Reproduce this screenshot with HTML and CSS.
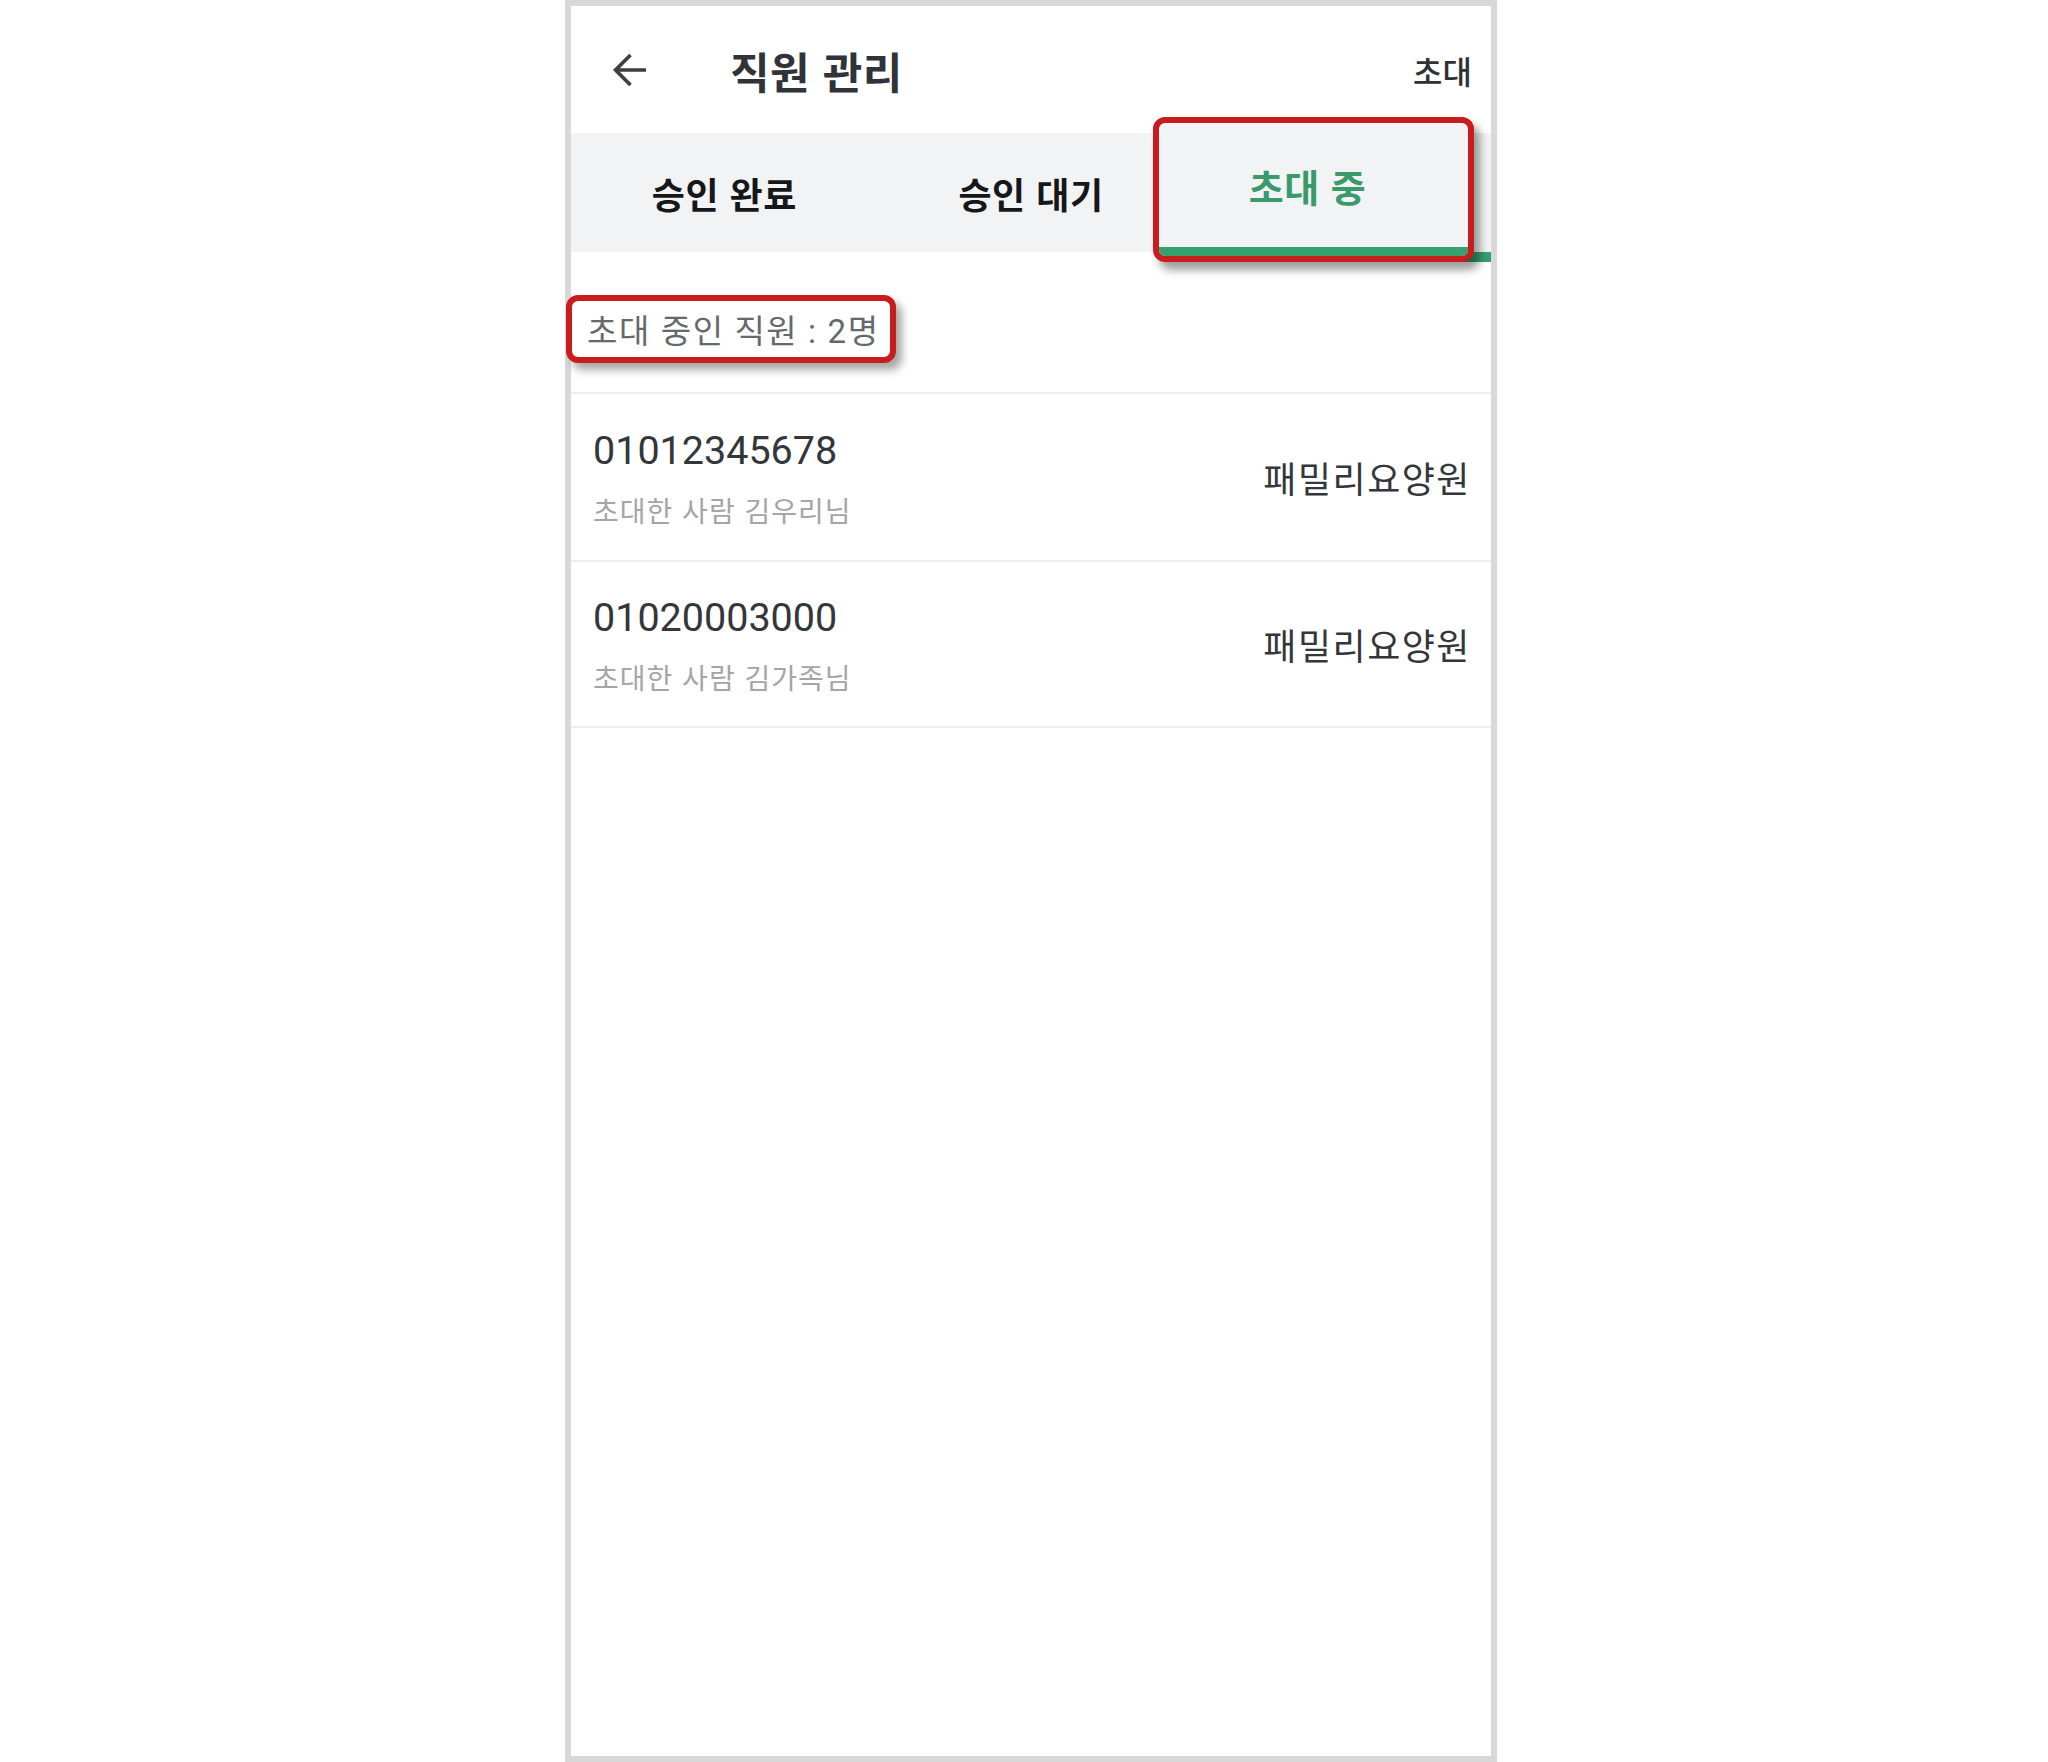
FILE: index.html
```html
<!DOCTYPE html>
<html lang="ko">
<head>
<meta charset="utf-8">
<title>직원 관리</title>
<link rel="stylesheet" href="styles.css">
</head>
<body>
<div class="frame">
  <header class="appbar">
    <svg class="back" width="36" height="36" viewBox="0 0 36 36" aria-hidden="true">
      <path d="M34 18 H4 M18.5 3 L3.5 18 L18.5 33" fill="none" stroke="#3c3f43" stroke-width="3.6" stroke-linejoin="miter"/>
    </svg>
    <h1 class="title">직원 관리</h1>
    <span class="action">초대</span>
  </header>

  <nav class="tabs">
    <div class="tab">승인 완료</div>
    <div class="tab">승인 대기</div>
    <div class="tab tab-active"></div>
  </nav>

  <div class="callout-tab">
    <span class="callout-tab-label">초대 중</span>
  </div>

  <div class="summary">
    <div class="summary-box">초대 중인 직원 : 2명</div>
  </div>

  <ul class="list">
    <li class="item">
      <div class="item-main">
        <div class="phone">01012345678</div>
        <div class="inviter">초대한 사람 김우리님</div>
      </div>
      <div class="org">패밀리요양원</div>
    </li>
    <li class="item">
      <div class="item-main">
        <div class="phone">01020003000</div>
        <div class="inviter">초대한 사람 김가족님</div>
      </div>
      <div class="org">패밀리요양원</div>
    </li>
  </ul>
</div>
</body>
</html>
```

FILE: styles.css
```css
* { box-sizing: border-box; }

html, body {
  margin: 0;
  padding: 0;
  background: #ffffff;
}

body {
  font-family: "Roboto", "Noto Sans CJK KR", sans-serif;
  color: #333;
}

.frame {
  position: relative;
  margin-left: 565px;
  width: 932px;
  height: 1762px;
  border: 6px solid #d8d8d8;
  background: #fff;
  display: flex;
  flex-direction: column;
}

.appbar {
  height: 127px;
  display: flex;
  align-items: center;
  padding: 0 19px 0 41px;
}

.back {
  display: block;
  flex: none;
}

.title {
  margin: 0 0 0 82px;
  font-family: "Noto Sans CJK KR", sans-serif;
  font-size: 43px;
  font-weight: 700;
  letter-spacing: 0.5px;
  color: #303438;
  flex: 1;
}

.action {
  font-family: "Noto Sans CJK KR", sans-serif;
  font-size: 32px;
  font-weight: 500;
  color: #2f3235;
}

.tabs {
  display: grid;
  grid-template-columns: 1fr 1fr 1fr;
  height: 129px;
}

.tab {
  display: flex;
  align-items: center;
  justify-content: center;
  background: #f1f3f4;
  background-clip: padding-box;
  border-bottom: 10px solid transparent;
  font-family: "Noto Sans CJK KR", sans-serif;
  font-size: 36px;
  font-weight: 700;
  letter-spacing: 0.5px;
  color: #151719;
}

.tab-active {
  border-bottom-color: #36a06e;
}

.callout-tab {
  position: absolute;
  left: 582px;
  top: 111px;
  width: 321px;
  height: 145px;
  border: 6px solid #c91c1d;
  border-radius: 12px;
  background: #f1f3f4;
  box-shadow: 6px 8px 8px rgba(0, 0, 0, 0.38);
  display: flex;
  align-items: center;
  justify-content: center;
  padding-bottom: 9px;
  overflow: hidden;
}

.callout-tab::after {
  content: "";
  position: absolute;
  left: 0;
  right: 0;
  bottom: 0;
  height: 9px;
  background: #36a06e;
}

.callout-tab-label {
  font-family: "Noto Sans CJK KR", sans-serif;
  font-size: 38px;
  font-weight: 700;
  letter-spacing: 0.5px;
  color: #3a9a6b;
  margin-left: -12px;
}

.summary {
  height: 130px;
  padding-top: 33px;
}

.summary-box {
  display: inline-flex;
  align-items: center;
  height: 68px;
  margin-left: -5px;
  padding: 0 10px 0 15px;
  border: 6px solid #c91c1d;
  border-radius: 12px;
  background: #fff;
  box-shadow: 6px 7px 8px rgba(0, 0, 0, 0.35);
  font-family: "Roboto", "Noto Sans CJK KR", sans-serif;
  font-size: 33px;
  letter-spacing: 1.6px;
  color: #66696c;
}

.list {
  list-style: none;
  margin: 0;
  padding: 0;
}

.item {
  display: flex;
  align-items: center;
  justify-content: space-between;
  height: 168px;
  border-top: 2px solid #eeeeee;
  padding: 0 20px 0 22px;
}

.item:last-child {
  border-bottom: 2px solid #eeeeee;
  height: 168px;
}

.item-main {
  display: flex;
  flex-direction: column;
  padding-top: 2px;
}

.phone {
  font-family: "Roboto", sans-serif;
  font-size: 39.5px;
  line-height: 46px;
  color: #33363a;
}

.inviter {
  margin-top: 18px;
  font-family: "Noto Sans CJK KR", sans-serif;
  font-size: 28px;
  line-height: 36px;
  letter-spacing: 1px;
  color: #a3a5a7;
}

.org {
  font-family: "Noto Sans CJK KR", sans-serif;
  font-size: 36px;
  letter-spacing: 1.5px;
  color: #33363a;
}
```
